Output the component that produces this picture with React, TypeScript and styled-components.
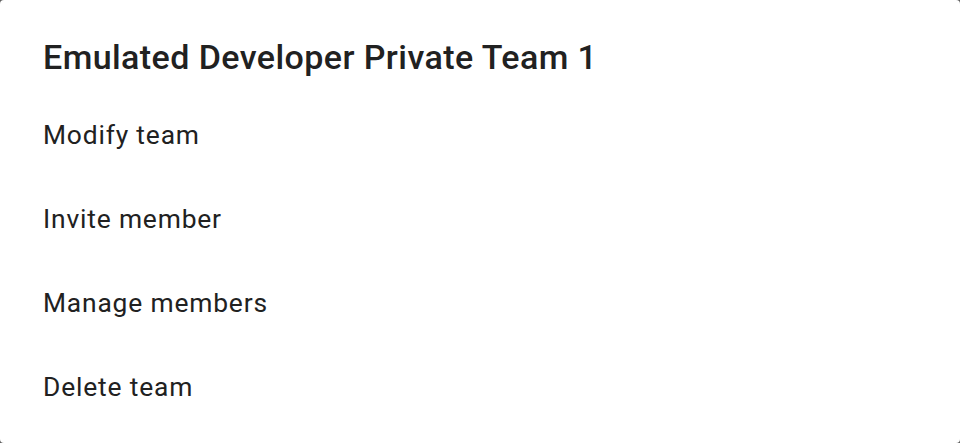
import styled, { createGlobalStyle } from 'styled-components';

const GlobalStyle = createGlobalStyle`
  html, body {
    margin: 0;
    padding: 0;
    background: #5f5f5f;
  }
  * {
    box-sizing: border-box;
  }
`;

const items = ['Modify team', 'Invite member', 'Manage members', 'Delete team'];

export default function App() {
  return (
    <>
      <GlobalStyle />
      <Dialog>
        <Title>Emulated Developer Private Team 1</Title>
        <List>
          {items.map((label) => (
            <Item key={label}>{label}</Item>
          ))}
        </List>
      </Dialog>
    </>
  );
}

const Dialog = styled.div`
  width: 960px;
  height: 443px;
  background: #ffffff;
  border-radius: 4px;
  padding: 37px 0 14px;
  font-family: Roboto, 'Noto Sans', sans-serif;
  color: #212121;
  display: flex;
  flex-direction: column;
`;

const Title = styled.h2`
  margin: 0 0 16px;
  padding: 0 43px;
  font-size: 34px;
  line-height: 40px;
  font-weight: 500;
  letter-spacing: 0.0125em;
`;

const List = styled.div`
  display: flex;
  flex-direction: column;
`;

const Item = styled.div`
  height: 84px;
  line-height: 84px;
  padding: 0 43px;
  font-size: 26.4px;
  font-weight: 400;
  letter-spacing: 0.03125em;
  cursor: pointer;
`;
